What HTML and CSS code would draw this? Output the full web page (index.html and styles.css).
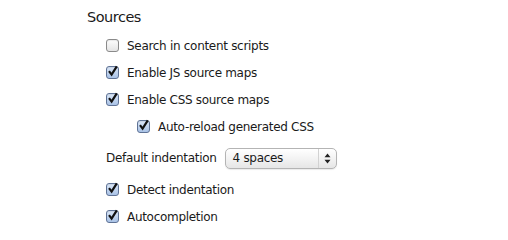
FILE: index.html
```html
<!DOCTYPE html>
<html>
<head>
<meta charset="utf-8">
<link rel="stylesheet" href="styles.css">
</head>
<body>
<div class="pane">
  <h2 class="title">Sources</h2>
  <div class="list">
    <label class="row">
      <span class="cb"></span>
      <span class="lbl">Search in content scripts</span>
    </label>
    <label class="row">
      <span class="cb checked"><svg viewBox="0 0 13 13" width="13" height="13"><path d="M3 6.2 L5.6 9.6 L10.8 1.4" fill="none" stroke="#111" stroke-width="2.2" stroke-linejoin="miter"/></svg></span>
      <span class="lbl">Enable JS source maps</span>
    </label>
    <label class="row">
      <span class="cb checked"><svg viewBox="0 0 13 13" width="13" height="13"><path d="M3 6.2 L5.6 9.6 L10.8 1.4" fill="none" stroke="#111" stroke-width="2.2" stroke-linejoin="miter"/></svg></span>
      <span class="lbl">Enable CSS source maps</span>
    </label>
    <label class="row sub">
      <span class="cb checked"><svg viewBox="0 0 13 13" width="13" height="13"><path d="M3 6.2 L5.6 9.6 L10.8 1.4" fill="none" stroke="#111" stroke-width="2.2" stroke-linejoin="miter"/></svg></span>
      <span class="lbl">Auto-reload generated CSS</span>
    </label>
    <div class="row selrow">
      <span class="lbl">Default indentation</span>
      <span class="select">
        <span class="selval">4 spaces</span>
        <span class="selarrow"><svg viewBox="0 0 7 11" width="7" height="11"><path d="M3.5 0.5 L6.5 4.2 L0.5 4.2 Z M3.5 10.5 L6.5 6.8 L0.5 6.8 Z" fill="#222"/></svg></span>
      </span>
    </div>
    <label class="row">
      <span class="cb checked"><svg viewBox="0 0 13 13" width="13" height="13"><path d="M3 6.2 L5.6 9.6 L10.8 1.4" fill="none" stroke="#111" stroke-width="2.2" stroke-linejoin="miter"/></svg></span>
      <span class="lbl">Detect indentation</span>
    </label>
    <label class="row">
      <span class="cb checked"><svg viewBox="0 0 13 13" width="13" height="13"><path d="M3 6.2 L5.6 9.6 L10.8 1.4" fill="none" stroke="#111" stroke-width="2.2" stroke-linejoin="miter"/></svg></span>
      <span class="lbl">Autocompletion</span>
    </label>
  </div>
</div>
</body>
</html>
```
FILE: styles.css
```css
html, body {
  margin: 0;
  padding: 0;
  background: #fff;
}
body {
  font-family: "DejaVu Sans", "Liberation Sans", sans-serif;
  color: #1a1a1a;
  font-size: 12px;
}
.pane {
  padding: 7px 0 0 87px;
}
.title {
  margin: 0;
  font-size: 14.5px;
  font-weight: normal;
  line-height: 20px;
  letter-spacing: -0.5px;
  color: #1a1a1a;
}
.list {
  display: flex;
  flex-direction: column;
  padding-left: 19px;
  padding-top: 5px;
}
.row {
  display: flex;
  align-items: center;
  height: 27px;
  gap: 8px;
}
.row.sub {
  padding-left: 31px;
}
.cb {
  position: relative;
  width: 11px;
  height: 11px;
  border: 1px solid #8a8a8a;
  border-radius: 3px;
  background: linear-gradient(#fdfdfd, #e4e4e4);
  box-shadow: inset 0 1px 1px rgba(0,0,0,0.08);
  flex: none;
}
.cb.checked {
  border-color: #5f7396;
  background: linear-gradient(#dce8f8, #a9c2e6);
}
.cb svg {
  position: absolute;
  left: -1px;
  top: -2px;
}
.lbl {
  white-space: nowrap;
  letter-spacing: -0.3px;
}
.selrow {
  height: 36px;
  gap: 8px;
}
.select {
  display: flex;
  align-items: center;
  width: 110px;
  height: 19px;
  border: 1px solid #b4b4b4;
  border-radius: 5px;
  background: linear-gradient(#ffffff, #f3f3f3 50%, #e6e6e6);
  box-shadow: 0 1px 1px rgba(0,0,0,0.08);
}
.selval {
  flex: 1;
  padding-left: 7px;
  letter-spacing: -0.3px;
}
.selarrow {
  width: 17px;
  height: 19px;
  border-left: 1px solid #d2d2d2;
  display: flex;
  align-items: center;
  justify-content: center;
}
```
